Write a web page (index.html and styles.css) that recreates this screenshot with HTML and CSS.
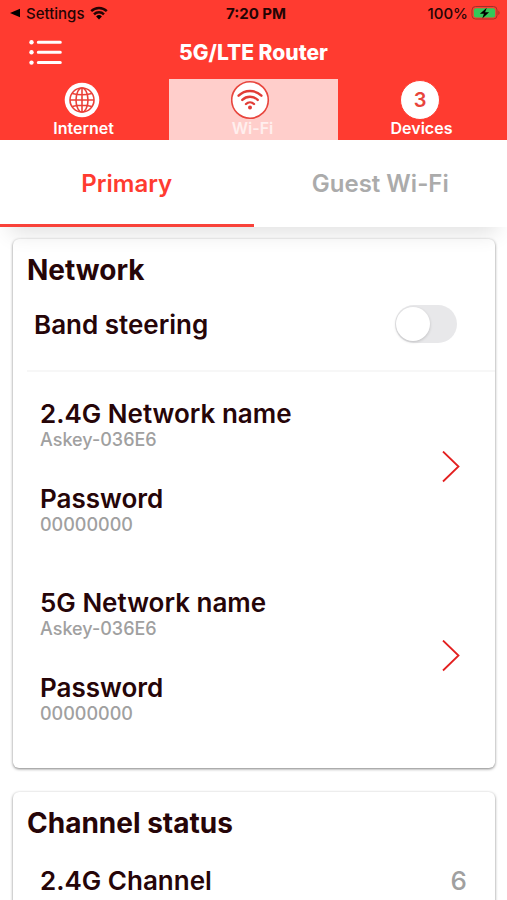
FILE: index.html
```html
<!DOCTYPE html>
<html lang="en">
<head>
<meta charset="utf-8">
<meta name="viewport" content="width=device-width, initial-scale=1">
<title>5G/LTE Router</title>
<link rel="stylesheet" href="styles.css">
</head>
<body>
<div class="app">
  <header class="header">
    <div class="status">
      <div class="status-left">
        <svg class="back-arrow" viewBox="0 0 10 10" aria-hidden="true"><path d="M0 5 10 .8v8.4z"/></svg>
        <span>Settings</span>
        <svg class="signal" viewBox="0 0 18 14" aria-hidden="true"><path class="arc" d="M1.2 5.2a11 11 0 0 1 15.6 0M4 8.3a7 7 0 0 1 10 0"/><path d="M9 13.4 6.1 10.4a4.2 4.2 0 0 1 5.8 0z"/></svg>
      </div>
      <span class="clock">7:20 PM</span>
      <div class="status-right">
        <span>100%</span>
        <svg class="battery" viewBox="0 0 31 16" aria-hidden="true"><rect class="shell" x="1" y="1.5" width="25" height="12.5" rx="3.5"/><rect class="charge" x="2.8" y="3.2" width="21.4" height="9.2" rx="2"/><path class="shell-tip" d="M27.4 5.4q2.4 2.3 0 4.8z"/><path d="M15.8 2.7 8.9 8.7h4l-1.6 4.7 6.8-6.2h-4z"/></svg>
      </div>
    </div>
    <div class="titlebar">
      <button class="menu" type="button" aria-label="Menu">
        <svg viewBox="0 0 34 26" aria-hidden="true"><g class="dots"><circle cx="2.5" cy="2.3" r="2.2"/><circle cx="2.5" cy="12.3" r="2.2"/><circle cx="2.5" cy="22.6" r="2.2"/></g><path d="M9.3 2.3h22M9.3 12.3h22M9.3 22.6h22"/></svg>
      </button>
      <h1>5G/LTE Router</h1>
    </div>
    <nav class="sections">
      <a class="section" href="#internet">
        <svg class="badge" viewBox="0 0 40 40" aria-hidden="true"><circle class="disc" cx="20" cy="20" r="17.3"/><g class="globe"><circle cx="20" cy="20" r="12"/><ellipse cx="20" cy="20" rx="6" ry="12"/><path d="M20 8v24M8 20h24M10.2 13.5q9.8 2.4 19.6 0M10.2 26.5q9.8-2.4 19.6 0"/></g></svg>
        <span class="section-label">Internet</span>
      </a>
      <a class="section section-current" href="#wifi" aria-current="page">
        <svg class="badge" viewBox="0 0 40 40" aria-hidden="true"><circle class="ring" cx="19" cy="20" r="18.3"/><path class="waves" d="M7.6 15.7a16 16 0 0 1 22.8 0M11.3 19.9a11 11 0 0 1 15.4 0M15 24a5.8 5.8 0 0 1 8 0"/><circle class="wave-dot" cx="19" cy="27.5" r="2"/></svg>
        <span class="section-label">Wi-Fi</span>
      </a>
      <a class="section" href="#devices">
        <span class="badge count">3</span>
        <span class="section-label">Devices</span>
      </a>
    </nav>
  </header>
  <nav class="tabs">
    <a class="tab tab-current" href="#primary" aria-current="page">Primary</a>
    <a class="tab" href="#guest">Guest Wi-Fi</a>
  </nav>
  <main class="content">
    <section class="card">
      <h2>Network</h2>
      <div class="steering">
        <label for="steering">Band steering</label>
        <input class="switch" id="steering" type="checkbox" role="switch">
      </div>
      <a class="network" href="#network-24">
        <dl>
          <dt>2.4G Network name</dt>
          <dd>Askey-036E6</dd>
          <dt>Password</dt>
          <dd>00000000</dd>
        </dl>
        <svg class="chevron" viewBox="0 0 18 32" aria-hidden="true"><path d="M1 .5 16.5 15.5 1 30.5"/></svg>
      </a>
      <a class="network" href="#network-5">
        <dl>
          <dt>5G Network name</dt>
          <dd>Askey-036E6</dd>
          <dt>Password</dt>
          <dd>00000000</dd>
        </dl>
        <svg class="chevron" viewBox="0 0 18 32" aria-hidden="true"><path d="M1 .5 16.5 15.5 1 30.5"/></svg>
      </a>
    </section>
    <section class="card">
      <h2>Channel status</h2>
      <div class="channel">
        <span>2.4G Channel</span>
        <span class="channel-value">6</span>
      </div>
    </section>
  </main>
</div>
</body>
</html>
```

FILE: styles.css
```css
* {
  box-sizing: border-box;
}

:root {
  --red: #ff3b30;
  --ink: #260508;
  --muted: #a0a0a0;
}

body {
  margin: 0;
  background: #fff;
  color: var(--ink);
  font-family: Inter, "Liberation Sans", sans-serif;
  font-weight: 600;
}

a {
  color: inherit;
  text-decoration: none;
}

h1,
h2,
dl,
dd {
  margin: 0;
}

svg {
  display: block;
}

.app {
  display: flex;
  flex-direction: column;
  height: 100vh;
}

/* Header */

.header {
  flex: none;
  background: var(--red);
  color: #fff;
}

.status {
  display: grid;
  grid-template-columns: 1fr auto 1fr;
  align-items: center;
  height: 26px;
  padding: 0 5px 0 10px;
  color: #240404;
  font-size: 15px;
  font-weight: 500;
}

.status-left,
.status-right {
  display: flex;
  align-items: center;
  gap: 5px;
}

.status-left {
  gap: 6px;
}

.status-right {
  justify-content: flex-end;
  gap: 3px;
}

.clock {
  font-weight: 700;
}

.back-arrow {
  width: 10px;
  height: 10px;
}

.signal {
  width: 18px;
  height: 14px;
}

.arc {
  fill: none;
  stroke: currentColor;
  stroke-width: 2.4;
}

.battery {
  width: 31px;
  height: 16px;
}

.shell {
  fill: none;
  stroke: #a3302a;
}

.shell-tip {
  fill: #a3302a;
}

.charge {
  fill: #34c759;
}

.titlebar {
  display: grid;
  grid-template-columns: 62px 1fr 62px;
  align-items: center;
  height: 53px;
}

.menu {
  padding: 0 0 0 29px;
  border: 0;
  background: none;
}

.menu svg {
  width: 34px;
  height: 26px;
  fill: none;
  stroke: #fff;
  stroke-width: 3;
  stroke-linecap: round;
}

.dots {
  fill: #fff;
  stroke: none;
}

h1 {
  font-size: 21px;
  font-weight: 800;
  line-height: 24px;
  text-align: center;
}

.sections {
  display: grid;
  grid-template-columns: repeat(3, 1fr);
}

.section {
  display: grid;
  justify-items: center;
  align-content: start;
  height: 61px;
  padding: 1px 2px 0 0;
  font-size: 16px;
  line-height: 16px;
}

.section-current {
  background: #ffcecb;
  color: #ffefee;
}

.badge {
  width: 40px;
  height: 40px;
  margin-right: 3px;
}

.disc {
  fill: #fff;
}

.globe {
  fill: none;
  stroke: #ea4138;
  stroke-width: 1.6;
}

.ring {
  fill: #fff;
  stroke: #e8453d;
  stroke-width: 1.6;
}

.waves {
  fill: none;
  stroke: #e13c35;
  stroke-width: 2.4;
  stroke-linecap: round;
}

.wave-dot {
  fill: #e13c35;
}

.count {
  display: grid;
  place-items: center;
  border: 1px solid var(--red);
  border-radius: 50%;
  background: #fff;
  color: #e8443b;
  font-size: 20px;
}

/* Primary and guest tabs */

.tabs {
  position: relative;
  z-index: 1;
  display: grid;
  grid-template-columns: 1fr 1fr;
  flex: none;
  background: #fff;
  box-shadow: 0 16px 20px -10px rgba(0, 0, 0, 0.12);
}

.tab {
  height: 87px;
  padding-top: 28px;
  border-bottom: 3px solid transparent;
  color: #ababab;
  font-size: 24px;
  line-height: 32px;
  text-align: center;
}

.tab-current {
  border-bottom-color: #f9423a;
  color: var(--red);
}

/* Cards */

.content {
  display: flex;
  flex: 1;
  flex-direction: column;
  gap: 24px;
  min-height: 0;
  padding: 12px 12px 0 13px;
  overflow-y: auto;
  scrollbar-width: none;
}

.card {
  flex: none;
  padding: 13px 0 20px 14px;
  border-radius: 6px;
  background: #fff;
  box-shadow: 0 1px 3px rgba(0, 0, 0, 0.5);
}

h2 {
  font-size: 28px;
  font-weight: 700;
  line-height: 36px;
}

.steering {
  display: flex;
  align-items: center;
  justify-content: space-between;
  height: 84px;
  padding: 0 38px 10px 7px;
  border-bottom: 2px solid #f7f7f7;
  font-size: 26px;
}

.switch {
  width: 62px;
  height: 38px;
  margin: 0;
  padding: 2px 1px;
  border-radius: 19px;
  background: #e8e8ea;
  appearance: none;
}

.switch::before {
  display: block;
  width: 34px;
  height: 34px;
  border-radius: 50%;
  background: #fff;
  box-shadow: 0 1px 3px rgba(0, 0, 0, 0.18);
  content: "";
}

.switch:checked {
  background: #34c759;
}

.switch:checked::before {
  margin-left: auto;
}

.network {
  display: flex;
  align-items: center;
  justify-content: space-between;
  padding: 26px 35px 24px 13px;
}

.network + .network {
  padding-top: 28px;
}

dt {
  font-size: 26px;
  line-height: 32px;
}

dd {
  color: var(--muted);
  font-size: 18px;
  font-weight: 500;
  line-height: 20px;
}

dd + dt {
  margin-top: 33px;
}

.chevron {
  width: 18px;
  height: 32px;
  fill: none;
  stroke: #e32020;
  stroke-width: 1.8;
}

.channel {
  display: flex;
  justify-content: space-between;
  padding: 24px 28px 0 13px;
  font-size: 26px;
  line-height: 32px;
}

.channel-value {
  color: var(--muted);
  font-weight: 500;
}
```
